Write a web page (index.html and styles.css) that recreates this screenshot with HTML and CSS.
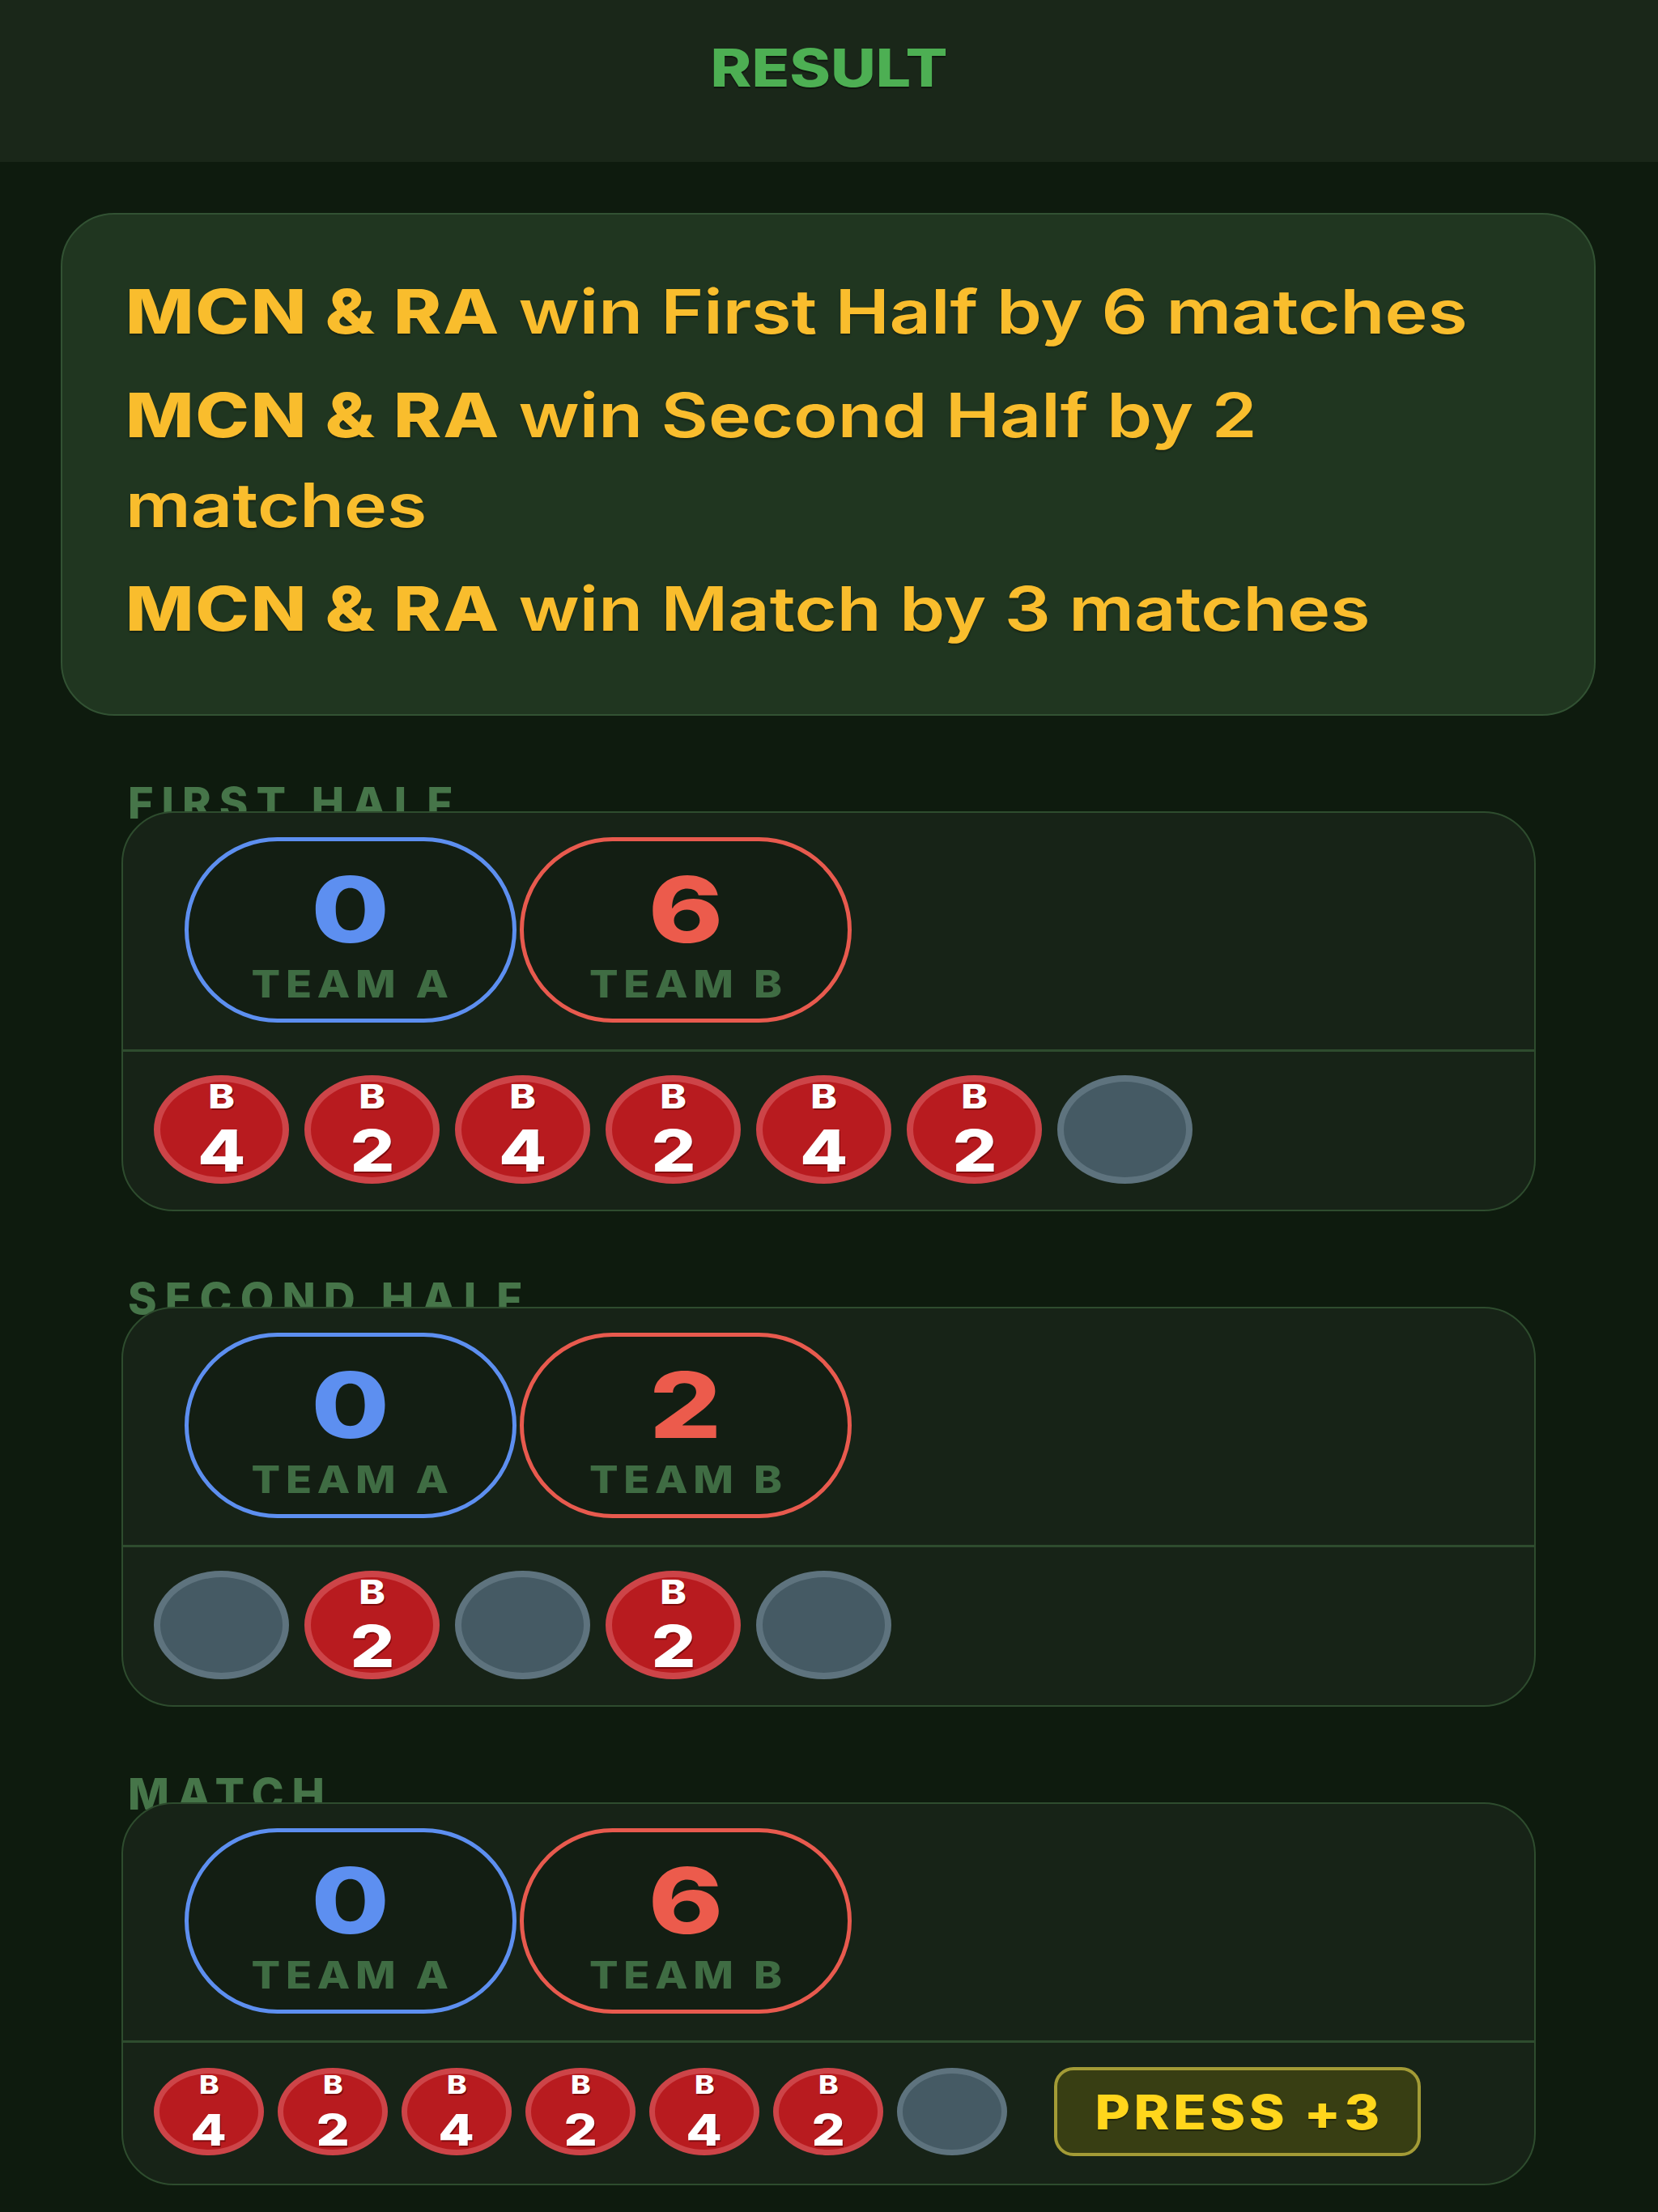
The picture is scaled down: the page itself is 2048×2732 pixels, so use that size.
FILE: index.html
```html
<!DOCTYPE html>
<html lang="en">
<head>
<meta charset="utf-8">
<title>Result</title>
<link rel="stylesheet" href="styles.css">
</head>
<body>
<header class="topbar">
  <h1 class="title"><span class="title-text">RESULT</span></h1>
</header>
<main class="page">
  <section class="summary">
    <p class="stmt"><strong>MCN &amp; RA</strong> win First Half by 6 matches</p>
    <p class="stmt"><strong>MCN &amp; RA</strong> win Second Half by 2 matches</p>
    <p class="stmt"><strong>MCN &amp; RA</strong> win Match by 3 matches</p>
  </section>

  <section class="block">
    <h2 class="block-label">FIRST HALF</h2>
    <div class="panel">
      <div class="scores">
        <div class="pill pill-a"><span class="pill-num">0</span><span class="pill-team">TEAM A</span></div>
        <div class="pill pill-b"><span class="pill-num">6</span><span class="pill-team">TEAM B</span></div>
      </div>
      <div class="chips">
        <div class="chip chip-win"><span class="chip-team">B</span><span class="chip-num">4</span></div>
        <div class="chip chip-win"><span class="chip-team">B</span><span class="chip-num">2</span></div>
        <div class="chip chip-win"><span class="chip-team">B</span><span class="chip-num">4</span></div>
        <div class="chip chip-win"><span class="chip-team">B</span><span class="chip-num">2</span></div>
        <div class="chip chip-win"><span class="chip-team">B</span><span class="chip-num">4</span></div>
        <div class="chip chip-win"><span class="chip-team">B</span><span class="chip-num">2</span></div>
        <div class="chip chip-empty"></div>
      </div>
    </div>
  </section>

  <section class="block">
    <h2 class="block-label">SECOND HALF</h2>
    <div class="panel">
      <div class="scores">
        <div class="pill pill-a"><span class="pill-num">0</span><span class="pill-team">TEAM A</span></div>
        <div class="pill pill-b"><span class="pill-num">2</span><span class="pill-team">TEAM B</span></div>
      </div>
      <div class="chips">
        <div class="chip chip-empty"></div>
        <div class="chip chip-win"><span class="chip-team">B</span><span class="chip-num">2</span></div>
        <div class="chip chip-empty"></div>
        <div class="chip chip-win"><span class="chip-team">B</span><span class="chip-num">2</span></div>
        <div class="chip chip-empty"></div>
      </div>
    </div>
  </section>

  <section class="block">
    <h2 class="block-label">MATCH</h2>
    <div class="panel">
      <div class="scores">
        <div class="pill pill-a"><span class="pill-num">0</span><span class="pill-team">TEAM A</span></div>
        <div class="pill pill-b"><span class="pill-num">6</span><span class="pill-team">TEAM B</span></div>
      </div>
      <div class="chips chips-sm">
        <div class="chip chip-win"><span class="chip-team">B</span><span class="chip-num">4</span></div>
        <div class="chip chip-win"><span class="chip-team">B</span><span class="chip-num">2</span></div>
        <div class="chip chip-win"><span class="chip-team">B</span><span class="chip-num">4</span></div>
        <div class="chip chip-win"><span class="chip-team">B</span><span class="chip-num">2</span></div>
        <div class="chip chip-win"><span class="chip-team">B</span><span class="chip-num">4</span></div>
        <div class="chip chip-win"><span class="chip-team">B</span><span class="chip-num">2</span></div>
        <div class="chip chip-empty"></div>
        <button class="press" type="button"><span class="press-text">PRESS +3</span></button>
      </div>
    </div>
  </section>
</main>
</body>
</html>
```

FILE: styles.css
```css
* {
  box-sizing: border-box;
}

html,
body {
  margin: 0;
  padding: 0;
}

body {
  width: 2048px;
  min-height: 2732px;
  background: #0e1b0e;
  font-family: Inter, "Noto Sans", "Liberation Sans", sans-serif;
}

/* ---------- top bar ---------- */
.topbar {
  height: 200px;
  background: #1a2719;
  display: flex;
  justify-content: center;
  padding-top: 52px;
}

.title {
  margin: 0;
  font-size: 64px;
  line-height: 64px;
  font-weight: 800;
  color: #4daf53;
  text-shadow: 0 2px 1px rgba(0, 0, 0, 0.45);
}

.title-text {
  display: inline-block;
  transform: scaleX(1.2);
}

/* ---------- page ---------- */
.page {
  display: flex;
  flex-direction: column;
  padding-bottom: 35px;
}

/* ---------- summary card ---------- */
.summary {
  margin: 63px 77px 0 75px;
  background: #203620;
  border: 2px solid #325233;
  border-radius: 66px;
  padding: 64px 78px 58px 78px;
}

.stmt {
  width: 1430px;
  margin: 0 0 17px;
  font-size: 75px;
  line-height: 111px;
  font-weight: 600;
  color: #f9bd2d;
  transform: scaleX(1.195);
  transform-origin: 0 0;
  text-shadow: 0 2px 2px rgba(0, 0, 0, 0.35);
}

.stmt strong {
  font-weight: 800;
  letter-spacing: 1.5px;
}

/* ---------- result blocks ---------- */
.block {
  margin: 81px 151px 0 150px;
}

.block-label {
  margin: 0 0 -17px;
  padding-left: 8px;
  font-size: 54px;
  line-height: 54px;
  font-weight: 800;
  letter-spacing: 10px;
  color: #467549;
}

.panel {
  position: relative;
  background: #172317;
  border: 2px solid #2e4c2e;
  border-radius: 64px;
}

.scores {
  display: flex;
  gap: 4px;
  padding: 30px 0 33px 76px;
  border-bottom: 3px solid #2e4c2e;
}

.pill {
  width: 410px;
  height: 229px;
  border: 5px solid;
  border-radius: 115px;
  background: #131e13;
  display: flex;
  flex-direction: column;
  align-items: center;
  padding-top: 28px;
}

.pill-a {
  border-color: #5d8ff0;
  color: #5d8ff0;
}

.pill-b {
  border-color: #e85a4e;
  color: #ec5b4c;
}

.pill-num {
  display: inline-block;
  font-size: 112px;
  line-height: 112px;
  font-weight: 800;
  transform: scaleX(1.25);
}

.pill-team {
  display: inline-block;
  margin-top: 12px;
  margin-right: -6px;
  font-size: 47px;
  line-height: 47px;
  font-weight: 800;
  letter-spacing: 6px;
  color: #3f6c43;
  transform: scaleX(1.12);
}

/* ---------- chips ---------- */
.chips {
  display: flex;
  align-items: center;
  gap: 19px;
  padding: 29px 38px 32px;
}

.chip {
  width: 167px;
  height: 134px;
  flex: none;
  border-radius: 50%;
  border: 8px solid;
  display: flex;
  flex-direction: column;
  align-items: center;
  color: #ffffff;
}

.chip-win {
  background: #b81b1f;
  border-color: #cd4448;
}

.chip-empty {
  background: #455a64;
  border-color: #5e737e;
}

.chip-team {
  display: inline-block;
  font-size: 41px;
  line-height: 36px;
  font-weight: 800;
  transform: scaleX(1.2);
  text-shadow: 1px 2px 0 rgba(90, 0, 0, 0.6);
}

.chip-num {
  display: inline-block;
  margin-top: 15px;
  font-size: 72px;
  line-height: 68px;
  font-weight: 800;
  transform: scaleX(1.2);
  text-shadow: 1px 2px 0 rgba(90, 0, 0, 0.6);
}

.chips-sm {
  gap: 17px;
  padding: 30px 38px 34px;
}

.chips-sm .chip {
  width: 136px;
  height: 108px;
  border-width: 7px;
}

.chips-sm .chip-team {
  font-size: 31px;
  line-height: 28px;
}

.chips-sm .chip-num {
  margin-top: 16px;
  font-size: 54px;
  line-height: 52px;
}

/* ---------- press button ---------- */
.press {
  margin-left: 41px;
  width: 453px;
  height: 110px;
  flex: none;
  display: flex;
  align-items: center;
  justify-content: center;
  background: #383e13;
  border: 4px solid #a39b36;
  border-radius: 24px;
  color: #ffd61c;
  font-family: Inter, "Noto Sans", "Liberation Sans", sans-serif;
  font-size: 59px;
  line-height: 59px;
  font-weight: 800;
  padding: 0 0 0 4px;
  text-shadow: 0 2px 1px rgba(0, 0, 0, 0.4);
}

.press-text {
  display: inline-block;
  letter-spacing: 4px;
  transform: scaleX(1.13);
}
```
